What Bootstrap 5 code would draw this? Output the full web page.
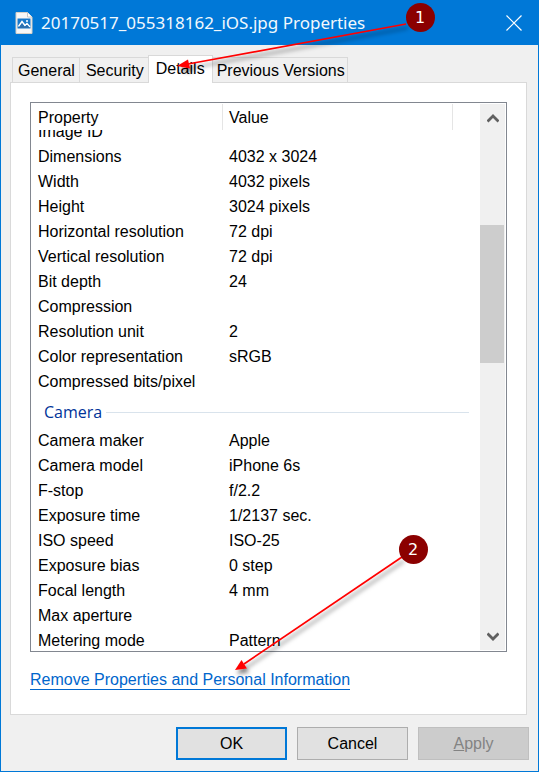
<!DOCTYPE html>
<html lang="en">
<head>
<meta charset="utf-8">
<meta name="viewport" content="width=device-width, initial-scale=1">
<title>20170517_055318162_iOS.jpg Properties</title>
<link href="https://cdn.jsdelivr.net/npm/bootstrap@5.3.0/dist/css/bootstrap.min.css" rel="stylesheet">
<style>
body { font-family: "Liberation Sans", Arial, sans-serif; font-size: 16px; line-height: 25px; color: #000; }
.win { background: #f0f0f0; border: 1px solid #0078d7; }
.titlebar { background: #0078d7; color: #f2f8fd; height: 44px; padding: 0 16px 0 14px; }
.titlebar h1 { font: 400 17px/24px "Noto Sans", "Segoe UI", sans-serif; margin: 0 0 0 8px; }
.close-btn { width: 16px; height: 16px; }
.tabs { padding: 10px 0 0 11px; }
.tabs .nav-link { border: 1px solid #d9d9d9; border-bottom: 0; color: #000; padding: 0 4px 0 5px; height: 25px; margin-right: -1px; white-space: nowrap; }
.tabs .nav-link + .nav-link { padding: 0 4px 0 6px; }
.tabs .nav-link.active { background: #fff; height: 28px; margin-bottom: -1px; padding: 0 7px; position: relative; line-height: 26px; }
.tabs .nav-link:last-child { padding: 0 2px 0 4px; }
.panel { background: #fff; border: 1px solid #d9d9d9; margin: 0 11px 0 9px; padding: 19px; }
.listbox { border: 1px solid #828790; height: 550px; padding: 1px 1px 1px 0; }
.props { table-layout: fixed; border-collapse: separate; border-spacing: 0; }
.props th, .props td { font-weight: 400; padding: 0 0 0 7px; height: 25px; white-space: nowrap; }
.props thead th { height: 26px; border-right: 1px solid #e5e5e5; }
.props thead th:last-child { border: 0; }
.props thead th:nth-child(2), .props td { padding-left: 6px; }
.props .partly th, .props .partly td { height: 14px; }
.partly div { height: 14px; }
.col-a { width: 192px; }
.col-c { width: 27px; }
.props .section th { height: 34px; padding: 2px 11px 0 13px; color: #003399; font: 400 16px/32px "Open Sans", "Segoe UI", sans-serif; }
.rule { height: 1px; background: #d9e3ec; }
.bar { width: 25px; background: #f0f0f0; }
.bar button { height: 28px; }
.thumb { height: 138px; margin: 93px 1px 0 0; background: #cdcdcd; }
.remove { color: #0066cc; text-decoration: none; border-bottom: 1px solid #0066cc; line-height: 18px; margin-top: 18px; display: inline-block; }
.remove-row { height: 43px; padding-top: 1px; }
.actions { gap: 10px; padding: 12px 9px 10px; }
.actions .btn { width: 111px; height: 33px; padding: 0; font-size: 16px; line-height: 24px; color: #000; background: #e1e1e1; border: 1px solid #adadad; border-radius: 0; }
.actions .btn-default { border: 2px solid #0078d7; }
.actions .btn:disabled { background: #ccc; border-color: #bfbfbf; color: #838383; opacity: 1; }
.notes { left: 0; top: 0; pointer-events: none; }
</style>
<script src="https://cdn.jsdelivr.net/npm/bootstrap@5.3.0/dist/js/bootstrap.bundle.min.js"></script>
</head>
<body>
<div class="win position-relative min-vh-100 d-flex flex-column">
  <header class="titlebar d-flex align-items-center">
    <svg width="18" height="22" viewBox="0 0 18 22" aria-hidden="true">
      <path d="M1 .5h11.5l4.500 4.500v16.500H1z" fill="#f7f7f7" stroke="#d5cfc6"/>
      <path d="M12.500.5V5H17" fill="#fff" stroke="#c8c8c8"/>
      <path d="M2.500 6.500h13v10h-13z" fill="#1979ca"/>
      <path d="M3.500 14.500l3.500-5 3 4 2-2 3 3.500" fill="none" stroke="#fff" stroke-width="1.500"/>
      <path d="M3.500 16l3.500-4.500 2.500 3 2.500-1.500 3 3z" fill="#2c6fae"/>
      <circle cx="12" cy="9" r="1" fill="#fff"/>
    </svg>
    <h1>20170517_055318162_iOS.jpg Properties</h1>
    <button class="close-btn btn p-0 border-0 ms-auto d-flex" type="button" aria-label="Close">
      <svg width="16" height="16" viewBox="0 0 16 16"><path d="M.5.5l15 15M15.500.5l-15 15" stroke="#fff" stroke-width="1.200"/></svg>
    </button>
  </header>
  <nav class="tabs nav flex-nowrap align-items-end" aria-label="Property pages">
    <a class="nav-link" href="#general">General</a>
    <a class="nav-link" href="#security">Security</a>
    <a class="nav-link active" href="#details" aria-current="page">Details</a>
    <a class="nav-link" href="#versions">Previous Versions</a>
  </nav>
  <main class="panel" id="details">
    <div class="listbox d-flex overflow-hidden">
      <div class="flex-grow-1 overflow-hidden">
        <table class="props w-100">
          <colgroup><col class="col-a"><col><col class="col-c"></colgroup>
          <thead><tr><th scope="col">Property</th><th scope="col">Value</th><th></th></tr></thead>
          <tbody>
            <tr class="partly"><th scope="row"><div class="d-flex align-items-end overflow-hidden"><span>Image ID</span></div></th><td colspan="2"></td></tr>
            <tr><th scope="row">Dimensions</th><td colspan="2">4032 x 3024</td></tr>
            <tr><th scope="row">Width</th><td colspan="2">4032 pixels</td></tr>
            <tr><th scope="row">Height</th><td colspan="2">3024 pixels</td></tr>
            <tr><th scope="row">Horizontal resolution</th><td colspan="2">72 dpi</td></tr>
            <tr><th scope="row">Vertical resolution</th><td colspan="2">72 dpi</td></tr>
            <tr><th scope="row">Bit depth</th><td colspan="2">24</td></tr>
            <tr><th scope="row">Compression</th><td colspan="2"></td></tr>
            <tr><th scope="row">Resolution unit</th><td colspan="2">2</td></tr>
            <tr><th scope="row">Color representation</th><td colspan="2">sRGB</td></tr>
            <tr><th scope="row">Compressed bits/pixel</th><td colspan="2"></td></tr>
            <tr class="section"><th colspan="3" scope="rowgroup"><div class="d-flex align-items-center gap-1">Camera<span class="rule flex-grow-1"></span></div></th></tr>
            <tr><th scope="row">Camera maker</th><td colspan="2">Apple</td></tr>
            <tr><th scope="row">Camera model</th><td colspan="2">iPhone 6s</td></tr>
            <tr><th scope="row">F-stop</th><td colspan="2">f/2.2</td></tr>
            <tr><th scope="row">Exposure time</th><td colspan="2">1/2137 sec.</td></tr>
            <tr><th scope="row">ISO speed</th><td colspan="2">ISO-25</td></tr>
            <tr><th scope="row">Exposure bias</th><td colspan="2">0 step</td></tr>
            <tr><th scope="row">Focal length</th><td colspan="2">4 mm</td></tr>
            <tr><th scope="row">Max aperture</th><td colspan="2"></td></tr>
            <tr><th scope="row">Metering mode</th><td colspan="2">Pattern</td></tr>
          </tbody>
        </table>
      </div>
      <div class="bar d-flex flex-column flex-shrink-0">
        <button class="btn p-0 border-0 d-flex align-items-center justify-content-center" type="button" aria-label="Scroll up">
          <svg width="12" height="10" viewBox="0 0 12 10"><path d="M.5 8.500L6 3l5.500 5.500" fill="none" stroke="#606060" stroke-width="2.800"/></svg>
        </button>
        <div class="thumb"></div>
        <button class="btn p-0 border-0 mt-auto d-flex align-items-center justify-content-center" type="button" aria-label="Scroll down">
          <svg width="12" height="10" viewBox="0 0 12 10"><path d="M.5 2.500L6 8l5.500-5.500" fill="none" stroke="#606060" stroke-width="2.800"/></svg>
        </button>
      </div>
    </div>
    <div class="remove-row"><a class="remove" href="#remove">Remove Properties and Personal Information</a></div>
  </main>
  <footer class="actions d-flex justify-content-end">
    <button class="btn btn-default" type="button">OK</button>
    <button class="btn" type="button">Cancel</button>
    <button class="btn" type="button" disabled><u>A</u>pply</button>
  </footer>
  <svg class="notes position-absolute" width="450" height="700" viewBox="1 1 450 700" aria-hidden="true">
    <defs><filter id="soft" x="-10%" y="-10%" width="130%" height="130%"><feDropShadow dx="2" dy="4" stdDeviation="2" flood-color="#000" flood-opacity=".5"/></filter></defs>
    <g filter="url(#soft)">
      <path d="M406 24L188 64" stroke="#f00" stroke-width="1.700"/>
      <path d="M177 66l11-6.500 2 9z" fill="#f00"/>
      <path d="M402 557L244 664" stroke="#f00" stroke-width="1.700"/>
      <path d="M235 670l6.500-10 5.500 8.500z" fill="#f00"/>
    </g>
    <g fill="#8b0000"><circle cx="420.500" cy="17.500" r="14.500"/><circle cx="413.500" cy="549.500" r="14.500"/></g>
    <g fill="#fff" font-family="DejaVu Sans, sans-serif" font-size="16" text-anchor="middle"><text x="420" y="23">1</text><text x="413" y="555">2</text></g>
  </svg>
</div>
</body>
</html>
